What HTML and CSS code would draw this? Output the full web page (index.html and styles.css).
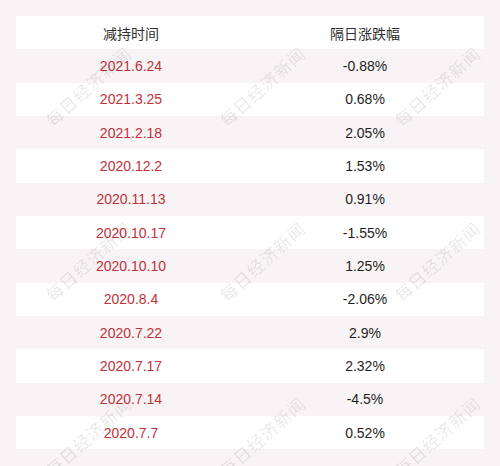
FILE: index.html
```html
<!DOCTYPE html>
<html lang="zh">
<head>
<meta charset="utf-8">
<link rel="stylesheet" href="styles.css">
</head>
<body>
<div class="page">
  <div class="table">
    <div class="row head"><div class="c1">减持时间</div><div class="c2">隔日涨跌幅</div></div>
    <div class="row"><div class="c1">2021.6.24</div><div class="c2">-0.88%</div></div>
    <div class="row"><div class="c1">2021.3.25</div><div class="c2">0.68%</div></div>
    <div class="row"><div class="c1">2021.2.18</div><div class="c2">2.05%</div></div>
    <div class="row"><div class="c1">2020.12.2</div><div class="c2">1.53%</div></div>
    <div class="row"><div class="c1">2020.11.13</div><div class="c2">0.91%</div></div>
    <div class="row"><div class="c1">2020.10.17</div><div class="c2">-1.55%</div></div>
    <div class="row"><div class="c1">2020.10.10</div><div class="c2">1.25%</div></div>
    <div class="row"><div class="c1">2020.8.4</div><div class="c2">-2.06%</div></div>
    <div class="row"><div class="c1">2020.7.22</div><div class="c2">2.9%</div></div>
    <div class="row"><div class="c1">2020.7.17</div><div class="c2">2.32%</div></div>
    <div class="row"><div class="c1">2020.7.14</div><div class="c2">-4.5%</div></div>
    <div class="row"><div class="c1">2020.7.7</div><div class="c2">0.52%</div></div>
  </div>
  <div class="marks">
    <span class="wm" style="left:88px;top:86px">每日经济新闻</span>
    <span class="wm" style="left:262px;top:86px">每日经济新闻</span>
    <span class="wm" style="left:437px;top:86px">每日经济新闻</span>
    <span class="wm" style="left:88px;top:261px">每日经济新闻</span>
    <span class="wm" style="left:262px;top:261px">每日经济新闻</span>
    <span class="wm" style="left:437px;top:261px">每日经济新闻</span>
    <span class="wm" style="left:88px;top:436px">每日经济新闻</span>
    <span class="wm" style="left:262px;top:436px">每日经济新闻</span>
    <span class="wm" style="left:437px;top:436px">每日经济新闻</span>
  </div>
</div>
</body>
</html>
```

FILE: styles.css
```css
html, body {
  margin: 0;
  padding: 0;
  background: #f8f4f5;
}
.page {
  position: relative;
  width: 500px;
  height: 466px;
  overflow: hidden;
  box-sizing: border-box;
  padding: 16px 16px 0 16px;
  font-family: "Liberation Sans", "Noto Sans CJK SC", sans-serif;
  font-size: 14px;
}
.table {
  display: flex;
  flex-direction: column;
  width: 468px;
}
.row {
  display: grid;
  grid-template-columns: 230px 238px;
  height: 33.333px;
  align-items: center;
  text-align: center;
}
.row:nth-child(odd) {
  background: #ffffff;
}
.row:nth-child(even) {
  background: #f8f4f5;
}
.c1 {
  color: #c2303a;
}
.c2 {
  color: #1e1e1e;
}
.head .c1, .head .c2 {
  color: #2e2e2e;
  font-family: "Noto Sans CJK SC", sans-serif;
  font-size: 14px;
}
.marks {
  position: absolute;
  inset: 0;
  pointer-events: none;
}
.wm {
  position: absolute;
  transform: translate(-50%, -50%) rotate(-42deg);
  white-space: nowrap;
  font-family: "Noto Sans CJK SC", sans-serif;
  font-size: 17px;
  letter-spacing: 1px;
  color: rgba(0, 0, 0, 0.1);
}
```
